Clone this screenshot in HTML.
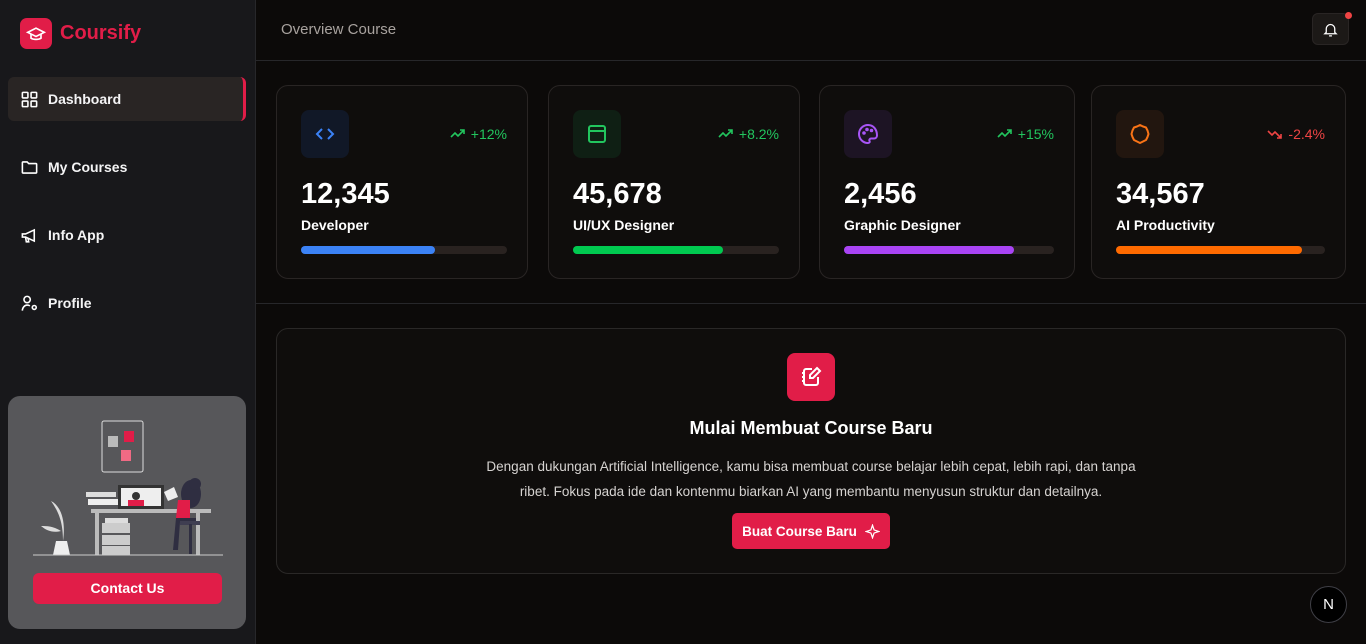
<!DOCTYPE html>
<html><head><meta charset="utf-8"><style>
*{box-sizing:border-box;margin:0;padding:0}
body{width:1366px;height:644px;overflow:hidden;background:#0c0a09;font-family:"Liberation Sans",sans-serif;color:#fff;position:relative}
.side{position:absolute;left:0;top:0;width:256px;height:644px;background:#18181b;border-right:1px solid #27272a}
.logo{position:absolute;left:20px;top:18px;width:32px;height:31px;border-radius:7px;background:#e11d48;display:flex;align-items:center;justify-content:center}
.brand{position:absolute;left:60px;top:22px;font-size:20px;font-weight:bold;color:#e11d48}
.nav{position:absolute;left:8px;width:238px;height:44px;display:flex;align-items:center;padding-left:12px;font-size:14px;font-weight:bold;color:#f4f4f5}
.nav svg{margin-right:9px}
.act{background:#292524;border-radius:6px;border-right:3px solid #e11d48}
.promo{position:absolute;left:8px;top:396px;width:238px;height:233px;background:#57575a;border-radius:12px}
.cbtn{position:absolute;left:25px;top:177px;width:189px;height:31px;background:#e11d48;border-radius:6px;text-align:center;line-height:31px;font-size:14px;font-weight:bold}
.hdr{position:absolute;left:256px;top:0;right:0;height:61px;border-bottom:1px solid #27272a}
.hdr .t{position:absolute;left:25px;top:21px;font-size:15px;color:#a8a29e}
.bell{position:absolute;left:1056px;top:13px;width:37px;height:32px;border:1px solid #292524;border-radius:6px;background:#1c1917;display:flex;align-items:center;justify-content:center}
.dot{position:absolute;left:1089px;top:12px;width:7px;height:7px;border-radius:50%;background:#ef4444}
.card{position:absolute;top:85px;height:194px;border:1px solid #292524;border-radius:12px;background:#0f0d0c}
.ic{position:absolute;left:24px;top:24px;width:48px;height:48px;border-radius:8px;display:flex;align-items:center;justify-content:center}
.tr{position:absolute;right:20px;top:40px;font-size:14px;display:flex;align-items:center;gap:5px}
.num{position:absolute;left:24px;top:92px;font-size:29px;font-weight:bold}
.lbl{position:absolute;left:24px;top:131px;font-size:14px;font-weight:bold}
.bar{position:absolute;left:24px;right:20px;top:160px;height:8px;border-radius:4px;background:#292220}
.bar i{display:block;height:8px;border-radius:4px}
.line2{position:absolute;left:256px;right:0;top:303px;border-top:1px solid #27272a}
.big{position:absolute;left:276px;top:328px;width:1070px;height:246px;border:1px solid #2a2827;border-radius:12px;background:#0f0d0c;text-align:center}
.big .i{position:absolute;left:510px;top:24px;width:48px;height:48px;border-radius:8px;background:#e11d48;display:flex;align-items:center;justify-content:center}
.big h2{position:absolute;left:0;right:0;top:89px;font-size:18px;font-weight:bold}
.big p{position:absolute;left:195px;right:195px;top:125px;font-size:13.5px;line-height:25px;color:#d6d3d1}
.bb{position:absolute;left:455px;top:184px;width:158px;height:36px;border-radius:5px;background:#e11d48;font-size:13.5px;font-weight:bold;display:flex;align-items:center;justify-content:center;gap:8px}
.n{position:absolute;left:1310px;top:586px;width:37px;height:37px;border-radius:50%;background:#000;border:1px solid #3f3f46;display:flex;align-items:center;justify-content:center;font-size:15px}
</style></head><body>
<div class="side">
<div class="logo"><svg width="20" height="20" viewBox="0 0 24 24" fill="none" stroke="#fff" stroke-width="2"><path d="M2 10l10-5 10 5-10 5z"/><path d="M6 12v5c3 2 9 2 12 0v-5"/></svg></div>
<div class="brand">Coursify</div>
<div class="nav act" style="top:77px"><svg width="19" height="19" viewBox="0 0 24 24" fill="none" stroke="#fff" stroke-width="2"><rect x="3" y="3" width="7" height="7" rx="1"/><rect x="14" y="3" width="7" height="7" rx="1"/><rect x="3" y="14" width="7" height="7" rx="1"/><rect x="14" y="14" width="7" height="7" rx="1"/></svg>Dashboard</div>
<div class="nav" style="top:145px"><svg width="19" height="19" viewBox="0 0 24 24" fill="none" stroke="#fff" stroke-width="2"><path d="M3 6a1 1 0 011-1h5l2 2h9a1 1 0 011 1v10a1 1 0 01-1 1H4a1 1 0 01-1-1z"/></svg>My Courses</div>
<div class="nav" style="top:213px"><svg width="19" height="19" viewBox="0 0 24 24" fill="none" stroke="#fff" stroke-width="2"><path d="M3 10v4h4l11 5V5L7 10z"/><path d="M7 14l1 6h3l-1-5"/></svg>Info App</div>
<div class="nav" style="top:281px"><svg width="19" height="19" viewBox="0 0 24 24" fill="none" stroke="#fff" stroke-width="2"><circle cx="9" cy="7" r="4"/><path d="M3 21c0-4 3-7 6-7 1.5 0 2.5.3 3.5 1"/><circle cx="18" cy="17" r="2.5"/></svg>Profile</div>
<div class="promo">
<svg width="238" height="170" viewBox="0 0 238 170">
<rect x="94" y="25" width="41" height="51" rx="2" fill="none" stroke="#ddd"/>
<rect x="100" y="40" width="10" height="11" fill="#bbb"/><rect x="116" y="35" width="10" height="11" fill="#e11d48"/><rect x="113" y="54" width="10" height="11" fill="#f06a84"/>
<rect x="78" y="96" width="30" height="5" fill="#ddd"/><rect x="80" y="103" width="31" height="6" fill="#eee"/>
<rect x="110" y="89" width="46" height="24" fill="#333"/><rect x="113" y="92" width="40" height="18" fill="#eee"/><circle cx="128" cy="100" r="4" fill="#333"/><rect x="120" y="104" width="16" height="6" fill="#e11d48"/>
<rect x="83" y="113" width="120" height="4" fill="#bbb"/>
<rect x="87" y="117" width="4" height="42" fill="#bbb"/><rect x="188" y="117" width="4" height="42" fill="#bbb"/>
<rect x="94" y="127" width="28" height="10" fill="#ccc"/><rect x="94" y="139" width="28" height="10" fill="#ccc"/><rect x="94" y="150" width="28" height="9" fill="#ccc"/>
<rect x="97" y="122" width="23" height="5" fill="#ddd"/>
<path d="M48 145h11l3 14H45z" fill="#eee"/><path d="M55 145c0-20-5-30-12-40 10 5 15 20 12 40z" fill="#ddd"/><path d="M53 135c-8-5-14-5-20-5 6 5 12 7 20 5z" fill="#ddd"/>
<ellipse cx="183" cy="98" rx="10" ry="14" fill="#2f2e41"/><circle cx="187" cy="88" r="6" fill="#2f2e41"/><path d="M170 104h12v18h-14z" fill="#e11d48"/><path d="M156 96l10-5 4 10-10 4z" fill="#eee"/>
<path d="M168 122h20v4h-16l-2 28h-5z" fill="#2f2e41"/><rect x="172" y="125" width="20" height="4" fill="#3f3e51"/><rect x="181" y="128" width="3" height="30" fill="#2f2e41"/>
<line x1="25" y1="159" x2="215" y2="159" stroke="#ccc"/>
</svg>
<div class="cbtn">Contact Us</div>
</div>
</div>
<div class="hdr"><div class="t">Overview Course</div>
<div class="bell"><svg width="17" height="17" viewBox="0 0 24 24" fill="none" stroke="#fff" stroke-width="1.8"><path d="M6 16V11a6 6 0 0112 0v5l2 2H4z"/><path d="M10 21h4"/></svg></div><div class="dot"></div></div>

<div class="card" style="left:276px;width:252px"><div class="ic" style="background:#111827"><svg width="24" height="24" viewBox="0 0 24 24" fill="none" stroke="#3b82f6" stroke-width="2"><path d="M9 7l-5 5 5 5M15 7l5 5-5 5"/></svg></div><div class="tr" style="color:#22c55e"><svg width="16" height="12" viewBox="0 0 16 12" fill="none" stroke="#22c55e" stroke-width="1.6"><path d="M1 9l4-4 3 3 6-6M10 2h4v4"/></svg>+12%</div><div class="num">12,345</div><div class="lbl">Developer</div><div class="bar"><i style="width:65%;background:#3b82f6"></i></div></div>

<div class="card" style="left:548px;width:252px"><div class="ic" style="background:#0f1f14"><svg width="24" height="24" viewBox="0 0 24 24" fill="none" stroke="#22c55e" stroke-width="2"><rect x="4" y="4" width="16" height="16" rx="2"/><path d="M4 9h16"/></svg></div><div class="tr" style="color:#22c55e"><svg width="16" height="12" viewBox="0 0 16 12" fill="none" stroke="#22c55e" stroke-width="1.6"><path d="M1 9l4-4 3 3 6-6M10 2h4v4"/></svg>+8.2%</div><div class="num">45,678</div><div class="lbl">UI/UX Designer</div><div class="bar"><i style="width:73%;background:#00c950"></i></div></div>

<div class="card" style="left:819px;width:256px"><div class="ic" style="background:#1d1424"><svg width="24" height="24" viewBox="0 0 24 24" fill="none" stroke="#a855f7" stroke-width="2"><path d="M12 3a9 9 0 100 18c1.5 0 2-1 1.5-2-.6-1.3.3-2.5 1.7-2.5H18a3 3 0 003-3C21 7 17 3 12 3z"/><circle cx="8" cy="11" r=".8" fill="#a855f7"/><circle cx="11" cy="7.5" r=".8" fill="#a855f7"/><circle cx="15.5" cy="8.5" r=".8" fill="#a855f7"/></svg></div><div class="tr" style="color:#22c55e"><svg width="16" height="12" viewBox="0 0 16 12" fill="none" stroke="#22c55e" stroke-width="1.6"><path d="M1 9l4-4 3 3 6-6M10 2h4v4"/></svg>+15%</div><div class="num">2,456</div><div class="lbl">Graphic Designer</div><div class="bar"><i style="width:81%;background:#a944f5"></i></div></div>

<div class="card" style="left:1091px;width:255px"><div class="ic" style="background:#22160f"><svg width="24" height="24" viewBox="0 0 24 24" fill="none" stroke="#f97316" stroke-width="2"><path d="M12 3l3 1.5 3 1 1.5 3 1 3.5-1 3-1.5 3-3 1.5L12 21l-3-1.5-3-1.5-1.5-3L3.5 12l1-3.5L6 5.5l3-1z" stroke-linejoin="round"/></svg></div><div class="tr" style="color:#ef4444"><svg width="16" height="12" viewBox="0 0 16 12" fill="none" stroke="#ef4444" stroke-width="1.6"><path d="M1 3l4 4 3-3 6 6M10 10h4V6"/></svg>-2.4%</div><div class="num">34,567</div><div class="lbl">AI Productivity</div><div class="bar"><i style="width:89%;background:#ff6a00"></i></div></div>

<div class="line2"></div>
<div class="big"><div class="i"><svg width="24" height="24" viewBox="0 0 24 24" fill="none" stroke="#fff" stroke-width="2"><path d="M13 4H7a2 2 0 00-2 2v12a2 2 0 002 2h10a2 2 0 002-2v-6"/><path d="M3 8h3M3 12h3M3 16h3"/><path d="M18 3l3 3-7 7h-3v-3z"/></svg></div>
<h2>Mulai Membuat Course Baru</h2>
<p>Dengan dukungan Artificial Intelligence, kamu bisa membuat course belajar lebih cepat, lebih rapi, dan tanpa ribet. Fokus pada ide dan kontenmu biarkan AI yang membantu menyusun struktur dan detailnya.</p>
<div class="bb">Buat Course Baru <svg width="15" height="15" viewBox="0 0 24 24" fill="none" stroke="#fff" stroke-width="2"><path d="M12 2l2.5 7.5L22 12l-7.5 2.5L12 22l-2.5-7.5L2 12l7.5-2.5z"/></svg></div></div>
<div class="n">N</div>
</body></html>
